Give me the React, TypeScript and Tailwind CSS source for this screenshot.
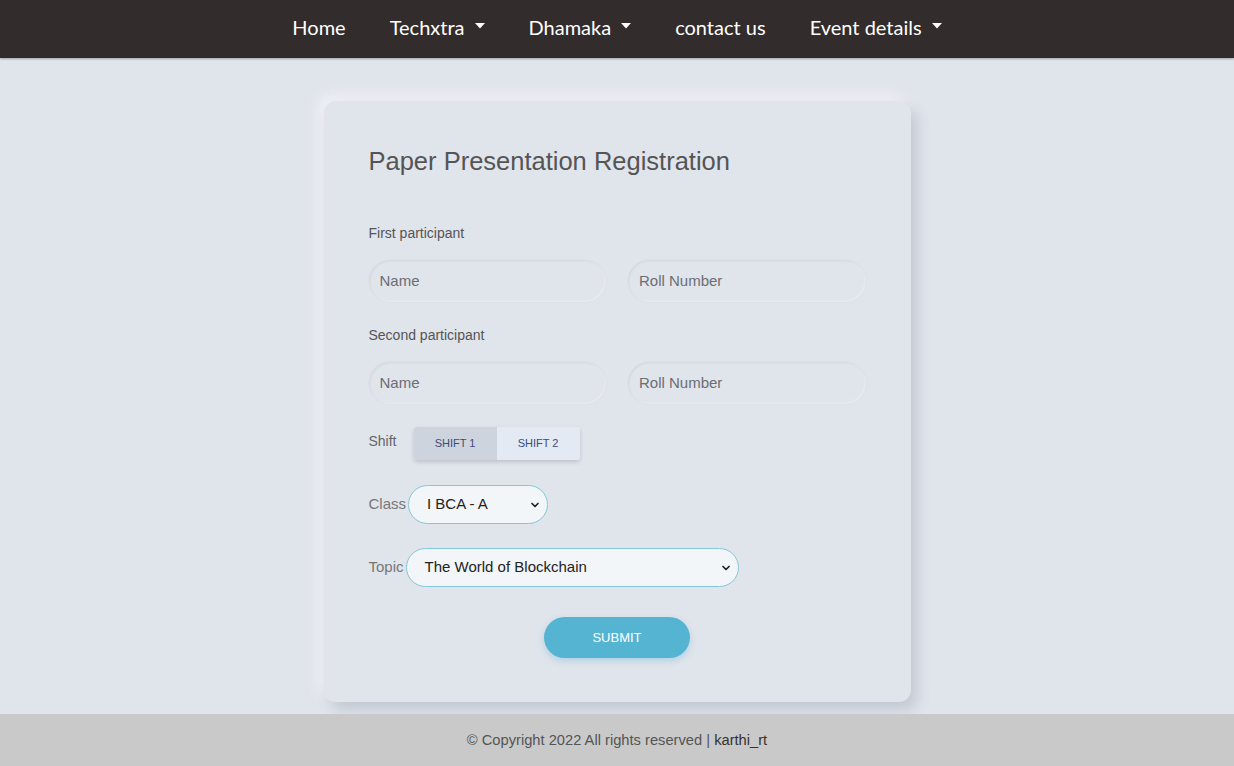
import { ChevronDown } from 'lucide-react'

const navItems = [
  { label: 'Home', caret: false },
  { label: 'Techxtra', caret: true },
  { label: 'Dhamaka', caret: true },
  { label: 'contact us', caret: false },
  { label: 'Event details', caret: true },
]

function Caret() {
  return (
    <svg width="10" height="6" viewBox="0 0 10 6" className="ml-[10px] mt-[-2px]">
      <path d="M0 0 L10 0 L5 5.5 Z" fill="#fff" />
    </svg>
  )
}

function Field({ placeholder }: { placeholder: string }) {
  return (
    <div className="h-[42px] w-[238px] rounded-full bg-[#e0e4eb] shadow-[inset_1px_1px_2px_#d3d7de,inset_-1px_-1px_2px_#e9edf3,0_0_0_1px_#dde1e8] flex items-center px-[11px]">
      <span className="text-[15px] text-[#6b6e73]">{placeholder}</span>
    </div>
  )
}

function Select({ value, width }: { value: string; width: string }) {
  return (
    <div
      className={`${width} h-[39px] rounded-full border border-[#86c6d9] bg-[#f3f6f9] flex items-center justify-between pl-[18px] pr-[6px]`}
    >
      <span className="text-[15px] text-[#222]">{value}</span>
      <ChevronDown className="w-[12px] h-[12px] text-[#222]" strokeWidth={3.5} />
    </div>
  )
}

export default function App() {
  return (
    <div className="min-h-[766px] flex flex-col bg-[#e0e4eb] font-['Liberation_Sans',Arial,sans-serif]">
      <nav className="h-[58px] pb-[4px] bg-[#322c2c] flex items-center justify-center gap-[44px] font-['Lato','Inter',sans-serif] text-[20px] text-white shadow-[0_1px_2px_rgba(0,0,0,0.3)]">
        {navItems.map((item) => (
          <div key={item.label} className="flex items-center">
            {item.label}
            {item.caret && <Caret />}
          </div>
        ))}
      </nav>

      <main className="flex-1 flex justify-center pt-[43px] pb-[12px]">
        <div className="w-[587px] h-[601px] rounded-[12px] bg-[#e0e4eb] shadow-[6px_8px_14px_#c2c8d2,-6px_-6px_14px_#f0f2f6] px-[45px] pt-[44px]">
          <h1 className="text-[25.5px] text-[#555] leading-[32px]">Paper Presentation Registration</h1>

          <p className="mt-[46px] text-[14px] text-[#555]">First participant</p>
          <div className="mt-[16px] flex gap-[22px]">
            <Field placeholder="Name" />
            <Field placeholder="Roll Number" />
          </div>

          <p className="mt-[23px] text-[14px] text-[#555]">Second participant</p>
          <div className="mt-[16px] flex gap-[22px]">
            <Field placeholder="Name" />
            <Field placeholder="Roll Number" />
          </div>

          <div className="mt-[23px] flex items-start">
            <span className="text-[14px] text-[#666] mt-[4px]">Shift</span>
            <div className="ml-[17px] flex rounded-[3px] shadow-[0_2px_4px_rgba(0,0,0,0.15)] overflow-hidden">
              <div className="w-[83px] h-[33px] bg-[#cdd4de] flex items-center justify-center text-[11px] text-[#3b4c7c]">
                SHIFT 1
              </div>
              <div className="w-[83px] h-[33px] bg-[#e4eaf4] flex items-center justify-center text-[11px] text-[#3b4c7c]">
                SHIFT 2
              </div>
            </div>
          </div>

          <div className="mt-[25px] flex items-center">
            <span className="text-[15px] text-[#777] mr-[2px]">Class</span>
            <Select value="I BCA - A" width="w-[140px]" />
          </div>

          <div className="mt-[24px] flex items-center">
            <span className="text-[15px] text-[#777] mr-[2px]">Topic</span>
            <Select value="The World of Blockchain" width="w-[333px]" />
          </div>

          <div className="mt-[30px] flex justify-center">
            <button className="w-[146px] h-[41px] rounded-full bg-[#56b4d3] text-white text-[13px] shadow-[0_3px_6px_rgba(86,180,211,0.35)]">
              SUBMIT
            </button>
          </div>
        </div>
      </main>

      <footer className="h-[52px] bg-[#c9c9c9] flex items-center justify-center text-[14.7px] text-[#555]">
        © Copyright 2022 All rights reserved |&nbsp;<span className="text-[#333]">karthi_rt</span>
      </footer>
    </div>
  )
}
